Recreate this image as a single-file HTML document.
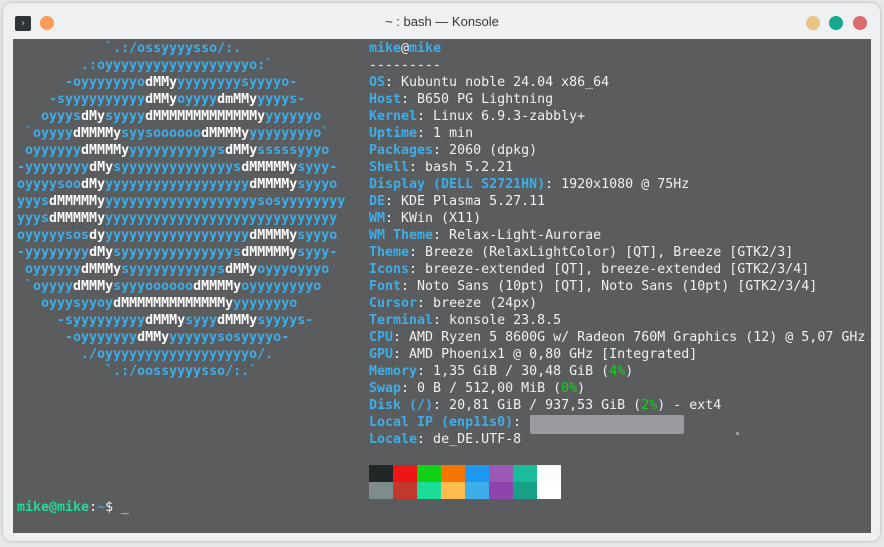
<!DOCTYPE html>
<html><head><meta charset="utf-8"><style>
html,body{margin:0;padding:0;width:884px;height:547px;background:#e8e8e9;overflow:hidden}
.win{position:absolute;left:3px;top:3px;width:877px;height:538px;background:#eff0f1;border-radius:9px;box-shadow:0 0 3px rgba(0,0,0,.25)}
.term{position:absolute;left:13px;top:39px;width:858px;height:494px;background:#5b5c5e}
.title{position:absolute;left:0;top:14px;width:884px;text-align:center;font:13px "Liberation Sans","DejaVu Sans",sans-serif;color:#31363b}
.dot{position:absolute;top:16px;width:14px;height:14px;border-radius:50%}
pre{position:absolute;margin:0;font-family:"DejaVu Sans Mono",monospace;font-size:13.3px;line-height:17px;color:#eff0f1}
.b{color:#3daee9;font-weight:bold}
.w{color:#fcfcfc;font-weight:bold}
.g{color:#11d116}
.p{color:#1cdc9a;font-weight:bold}
.sw{position:absolute;width:24px;height:17px}
</style></head><body>
<div class="win"></div>
<div style="position:absolute;left:15px;top:16px;width:16px;height:15px;background:#2f3437;border-radius:2px;color:#bbb;font:10px 'DejaVu Sans';line-height:15px;text-align:center">›</div>
<div class="dot" style="left:40px;background:#fd9c5a"></div>
<div class="title">~ : bash — Konsole</div>
<div class="dot" style="left:806px;background:#e8c583"></div>
<div class="dot" style="left:829px;background:#16a98e"></div>
<div class="dot" style="left:853px;background:#da6b6f"></div>
<div class="term"></div>
<pre style="left:17px;top:40px"><span class="b">           `.:/ossyyyysso/:.
        .:oyyyyyyyyyyyyyyyyyyo:`
      -oyyyyyyyo<span class="w">dMMy</span>yyyyyyyysyyyyo-
    -syyyyyyyyyy<span class="w">dMMy</span>oyyyy<span class="w">dmMMy</span>yyyys-
   oyyys<span class="w">dMy</span>syyyy<span class="w">dMMMMMMMMMMMMMy</span>yyyyyyo
 `oyyyy<span class="w">dMMMMy</span>syysoooooo<span class="w">dMMMMy</span>yyyyyyyyo`
 oyyyyyy<span class="w">dMMMMy</span>yyyyyyyyyyys<span class="w">dMMy</span>sssssyyyo
-yyyyyyyy<span class="w">dMy</span>syyyyyyyyyyyyyys<span class="w">dMMMMMy</span>syyy-
oyyyysoo<span class="w">dMy</span>yyyyyyyyyyyyyyyyyy<span class="w">dMMMMy</span>syyyo
yyys<span class="w">dMMMMMy</span>yyyyyyyyyyyyyyyyyyysosyyyyyyyy
yyys<span class="w">dMMMMMy</span>yyyyyyyyyyyyyyyyyyyyyyyyyyyyy
oyyyyysos<span class="w">dy</span>yyyyyyyyyyyyyyyyyy<span class="w">dMMMMy</span>syyyo
-yyyyyyyy<span class="w">dMy</span>syyyyyyyyyyyyyys<span class="w">dMMMMMy</span>syyy-
 oyyyyyy<span class="w">dMMMy</span>syyyyyyyyyyys<span class="w">dMMy</span>oyyyoyyyo
 `oyyyy<span class="w">dMMMy</span>syyyoooooo<span class="w">dMMMMy</span>oyyyyyyyyo
   oyyysyyoy<span class="w">dMMMMMMMMMMMMMy</span>yyyyyyyo
     -syyyyyyyyy<span class="w">dMMMy</span>syyy<span class="w">dMMMy</span>syyyys-
      -oyyyyyyy<span class="w">dMMy</span>yyyyyysosyyyyo-
        ./oyyyyyyyyyyyyyyyyyyo/.
           `.:/oossyyyysso/:.`</span></pre>
<pre style="left:17px;top:499px"><span class="p">mike@mike</span>:<span class="b" style="font-weight:normal">~</span>$ _</pre>
<pre style="left:369px;top:40px"><span class="b">mike</span>@<span class="b">mike</span>
---------
<span class="b">OS</span>: Kubuntu noble 24.04 x86_64
<span class="b">Host</span>: B650 PG Lightning
<span class="b">Kernel</span>: Linux 6.9.3-zabbly+
<span class="b">Uptime</span>: 1 min
<span class="b">Packages</span>: 2060 (dpkg)
<span class="b">Shell</span>: bash 5.2.21
<span class="b">Display (DELL S2721HN)</span>: 1920x1080 @ 75Hz
<span class="b">DE</span>: KDE Plasma 5.27.11
<span class="b">WM</span>: KWin (X11)
<span class="b">WM Theme</span>: Relax-Light-Aurorae
<span class="b">Theme</span>: Breeze (RelaxLightColor) [QT], Breeze [GTK2/3]
<span class="b">Icons</span>: breeze-extended [QT], breeze-extended [GTK2/3/4]
<span class="b">Font</span>: Noto Sans (10pt) [QT], Noto Sans (10pt) [GTK2/3/4]
<span class="b">Cursor</span>: breeze (24px)
<span class="b">Terminal</span>: konsole 23.8.5
<span class="b">CPU</span>: AMD Ryzen 5 8600G w/ Radeon 760M Graphics (12) @ 5,07 GHz
<span class="b">GPU</span>: AMD Phoenix1 @ 0,80 GHz [Integrated]
<span class="b">Memory</span>: 1,35 GiB / 30,48 GiB (<span class="g">4%</span>)
<span class="b">Swap</span>: 0 B / 512,00 MiB (<span class="g">0%</span>)
<span class="b">Disk (/)</span>: 20,81 GiB / 937,53 GiB (<span class="g">2%</span>) - ext4
<span class="b">Local IP (enp11s0)</span>:
<span class="b">Locale</span>: de_DE.UTF-8</pre>
<div style="position:absolute;left:530px;top:415px;width:154px;height:19px;background:#9c9b9f;border-radius:2px"></div>
<div style="position:absolute;left:736px;top:432px;width:3px;height:3px;background:#aaa;border-radius:50%"></div>
<div class="sw" style="left:369px;top:465px;background:#232627"></div>
<div class="sw" style="left:393px;top:465px;background:#ed1515"></div>
<div class="sw" style="left:417px;top:465px;background:#11d116"></div>
<div class="sw" style="left:441px;top:465px;background:#f67400"></div>
<div class="sw" style="left:465px;top:465px;background:#1d99f3"></div>
<div class="sw" style="left:489px;top:465px;background:#9b59b6"></div>
<div class="sw" style="left:513px;top:465px;background:#1abc9c"></div>
<div class="sw" style="left:537px;top:465px;background:#fcfcfc"></div>
<div class="sw" style="left:369px;top:482px;background:#7f8c8d"></div>
<div class="sw" style="left:393px;top:482px;background:#c0392b"></div>
<div class="sw" style="left:417px;top:482px;background:#1cdc9a"></div>
<div class="sw" style="left:441px;top:482px;background:#fdbc4b"></div>
<div class="sw" style="left:465px;top:482px;background:#3daee9"></div>
<div class="sw" style="left:489px;top:482px;background:#8e44ad"></div>
<div class="sw" style="left:513px;top:482px;background:#16a085"></div>
<div class="sw" style="left:537px;top:482px;background:#ffffff"></div>
</body></html>
